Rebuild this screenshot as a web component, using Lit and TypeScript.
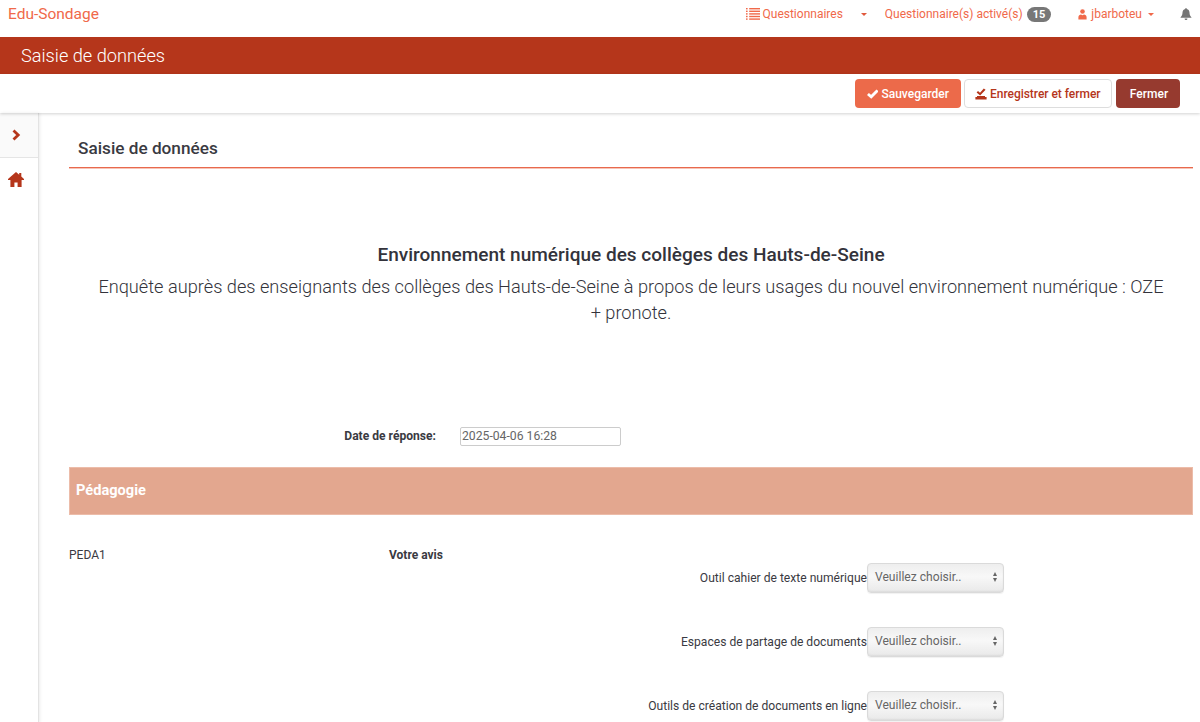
import { LitElement, html, css, svg } from "lit";
import { customElement } from "lit/decorators.js";

const listIcon = svg`<svg class="ic" width="14" height="12" viewBox="0 0 14 12" fill="currentColor"><rect x="0" y="0" width="1.6" height="1.4"/><rect x="3.2" y="0" width="10.8" height="1.4"/><rect x="0" y="2.6" width="1.6" height="1.4"/><rect x="3.2" y="2.6" width="10.8" height="1.4"/><rect x="0" y="5.2" width="1.6" height="1.4"/><rect x="3.2" y="5.2" width="10.8" height="1.4"/><rect x="0" y="7.8" width="1.6" height="1.4"/><rect x="3.2" y="7.8" width="10.8" height="1.4"/><rect x="0" y="10.4" width="1.6" height="1.4"/><rect x="3.2" y="10.4" width="10.8" height="1.4"/></svg>`;
const userIcon = svg`<svg width="9" height="11" viewBox="0 0 9 11" fill="currentColor"><circle cx="4.5" cy="2.5" r="2.3"/><path d="M0.4 10.6V8.2C0.4 6.3 1.8 5.4 3 5.4L4.5 6.2L6 5.4C7.2 5.4 8.6 6.3 8.6 8.2V10.6Z"/></svg>`;
const bellIcon = svg`<svg width="12" height="12" viewBox="0 0 12 12" fill="#757575"><path d="M6 0C6.5 0 6.8 .4 6.8 .9C8.6 1.3 9.5 2.8 9.5 4.6C9.5 7 10.2 8 11.4 9.2V9.8H.6V9.2C1.8 8 2.5 7 2.5 4.6C2.5 2.8 3.4 1.3 5.2 .9C5.2 .4 5.5 0 6 0Z"/><path d="M4.6 10.4H7.4C7.4 11.3 6.8 12 6 12S4.6 11.3 4.6 10.4Z"/></svg>`;
const checkIcon = svg`<svg width="12" height="10" viewBox="0 0 12 10" fill="none" stroke="currentColor" stroke-width="3"><path d="M1 5L4.4 8L11 1.2"/></svg>`;
const saveIcon = svg`<svg width="12" height="12" viewBox="0 0 12 12" fill="currentColor"><path d="M1.6 4.4L3 3L5 4.8L8.8 0.4L10.6 1.8L5.1 7.6Z"/><path d="M2 8H10V9H11.6V11.6H0.4V9H2Z"/></svg>`;
const chevronIcon = svg`<svg width="9" height="12" viewBox="0 0 9 12" fill="none" stroke="#b5361b" stroke-width="2.8"><path d="M1.5 1.5L6.2 6L1.5 10.5"/></svg>`;
const homeIcon = svg`<svg width="16" height="15" viewBox="0 0 16 15" fill="#b5361b"><path d="M8 0L11.2 2.7V1H13.3V4.5L16 6.9V7.9H13.6V15H9.6V10.4H6.4V15H2.4V7.9H0V6.9Z"/></svg>`;

@customElement("app-root")
export class AppRoot extends LitElement {
  static styles = css`
    :host { display: block; width: 1200px; height: 722px; overflow: hidden; background: #fff;
      font-family: Roboto, "Liberation Sans", sans-serif; color: #3a3a42; font-size: 12px; }
    .nav { height: 37px; display: flex; align-items: center; padding: 0 8px 9px 8px; box-sizing: border-box; color: #f0694a; }
    .brand { font-size: 15.5px; margin-right: auto; }
    .nav-item { display: flex; align-items: center; gap: 3px; font-size: 12px; white-space: nowrap; }
    .q { margin-right: 18px; }
    .active { margin-right: 27px; }
    .user { margin-right: 26px; gap: 4px; }
    .caret { width: 0; height: 0; border: 3.5px solid transparent; border-top-color: currentColor; border-bottom-width: 0; display: inline-block; }
    .q .caret { margin-left: 15px; color: #e0583c; }
    .user .caret { margin-left: 2px; }
    .badge { background: #777; color: #fff; font-size: 11px; font-weight: 700; border-radius: 9px; padding: 1px 6px; line-height: 13px; margin-left: 1px; }
    .titlebar { height: 37px; background: #b5361b; color: #fff; font-size: 18.2px; font-weight: 300; display: flex; align-items: center; padding-left: 21px; }
    .actions { height: 39px; box-sizing: border-box; display: flex; justify-content: flex-end; align-items: flex-start; gap: 3px; padding: 5px 20px 0 0; box-shadow: 0 1px 3px rgba(0,0,0,.18); position: relative; }
    .btn { height: 29px; box-sizing: border-box; border-radius: 4px; font-size: 12px; font-weight: 500; display: flex; align-items: center; gap: 3px; padding: 0 11px; border: 1px solid transparent; white-space: nowrap; }
    .primary { background: #ec6a4a; color: #fff; width: 106px; }
    .outline { background: #fff; color: #b5361b; border-color: #ddd; width: 148px; gap: 3px; padding: 0 10px; margin-right: 1px; letter-spacing: -0.03px; }
    .close { background: #963a2f; color: #fff; width: 64px; justify-content: center; padding-left: 13px; }
    .body { display: flex; height: 610px; }
    .side { width: 38px; flex: none; border-right: 1px solid #e3e3e3; box-shadow: 1px 0 3px rgba(0,0,0,.08); }
    .side-top { height: 45px; display: flex; align-items: center; justify-content: center; background: #fafafa; border-bottom: 1px solid #e5e5e5; padding-right: 6px; box-sizing: border-box; }
    .side-home { height: 42px; display: flex; align-items: center; justify-content: center; padding-right: 7px; box-sizing: border-box; }
    .main { flex: 1; padding: 0 7px 0 30px; min-width: 0; }
    .head { height: 55px; box-sizing: border-box; border-bottom: 1px solid #e8694d; box-shadow: 0 1px 0 #f7c4b7; padding: 25px 0 0 9px; font-size: 17.2px; font-weight: 500; line-height: 20px; color: #3a3a42; }
    .intro { text-align: center; padding: 74px 26px 0; height: 268px; box-sizing: border-box; }
    .intro h2 { margin: 0 0 6px; font-size: 19.05px; font-weight: 500; line-height: 26px; color: #33333b; }
    .intro p { margin: 0; font-size: 18.2px; font-weight: 300; line-height: 26px; color: #33333b; }
    .date { display: flex; align-items: center; height: 0; }
    .date-label { width: 367px; text-align: right; font-weight: 700; font-size: 12.1px; margin-right: 24px; }
    .date-input { width: 161px; height: 19px; box-sizing: border-box; border: 1px solid #ccc; border-radius: 2px; font-size: 12.2px; color: #666; padding-left: 1px; line-height: 17px; }
    .section { margin-top: 31px; height: 48px; box-sizing: border-box; background: #e3a78f; border: 1px solid #ecbca9; color: #fff; font-size: 14.6px; font-weight: 700; display: flex; align-items: center; padding: 0 0 2px 6px; }
    .q-block { display: flex; padding-top: 33px; }
    .code { width: 320px; flex: none; line-height: 14px; }
    .q-body { flex: 1; }
    .avis { font-weight: 700; line-height: 14px; }
    .row { display: flex; justify-content: flex-start; align-items: flex-start; height: 64px; }
    .rows { margin-top: 1px; }
    .row-label { width: 478px; text-align: right; line-height: 14px; padding-top: 8px; white-space: nowrap; box-sizing: border-box; font-size: 12.1px; }
    .select { width: 137px; height: 30px; box-sizing: border-box; border: 1px solid #dadada; border-radius: 4px; background: linear-gradient(#eeeeee, #f8f8f8 45%, #e9e9e9); box-shadow: inset 0 -1px 2px rgba(0,0,0,.06), 0 1px 1px rgba(0,0,0,.06); color: #666; display: flex; align-items: center; justify-content: space-between; padding: 0 6px 2px 7px; font-size: 12.1px; }
    .arrows { display: flex; flex-direction: column; gap: 2px; }
    .up { width: 0; height: 0; border: 2.5px solid transparent; border-bottom: 4px solid #666; border-top-width: 0; }
    .down { width: 0; height: 0; border: 2.5px solid transparent; border-top: 4px solid #666; border-bottom-width: 0; }
  `;

  private rows = ["Outil cahier de texte numérique", "Espaces de partage de documents", "Outils de création de documents en ligne"];

  render() {
    return html`
      <div class="nav">
        <span class="brand">Edu-Sondage</span>
        <span class="nav-item q">${listIcon}<span>Questionnaires</span><span class="caret"></span></span>
        <span class="nav-item active">Questionnaire(s) activé(s)<span class="badge">15</span></span>
        <span class="nav-item user">${userIcon}<span>jbarboteu</span><span class="caret"></span></span>
        ${bellIcon}
      </div>
      <div class="titlebar">Saisie de données</div>
      <div class="actions">
        <div class="btn primary">${checkIcon}<span>Sauvegarder</span></div>
        <div class="btn outline">${saveIcon}<span>Enregistrer et fermer</span></div>
        <div class="btn close">Fermer</div>
      </div>
      <div class="body">
        <div class="side">
          <div class="side-top">${chevronIcon}</div>
          <div class="side-home">${homeIcon}</div>
        </div>
        <div class="main">
          <div class="head">Saisie de données</div>
          <div class="intro">
            <h2>Environnement numérique des collèges des Hauts-de-Seine</h2>
            <p>Enquête auprès des enseignants des collèges des Hauts-de-Seine à propos de leurs usages du nouvel environnement numérique : OZE + pronote.</p>
          </div>
          <div class="date">
            <div class="date-label">Date de réponse:</div>
            <div class="date-input">2025-04-06 16:28</div>
          </div>
          <div class="section">Pédagogie</div>
          <div class="q-block">
            <div class="code">PEDA1</div>
            <div class="q-body">
              <div class="avis">Votre avis</div>
              <div class="rows">
                ${this.rows.map((r) => html`<div class="row"><div class="row-label">${r}</div>
                  <div class="select"><span>Veuillez choisir..</span><span class="arrows"><span class="up"></span><span class="down"></span></span></div></div>`)}
              </div>
            </div>
          </div>
        </div>
      </div>
    `;
  }
}
